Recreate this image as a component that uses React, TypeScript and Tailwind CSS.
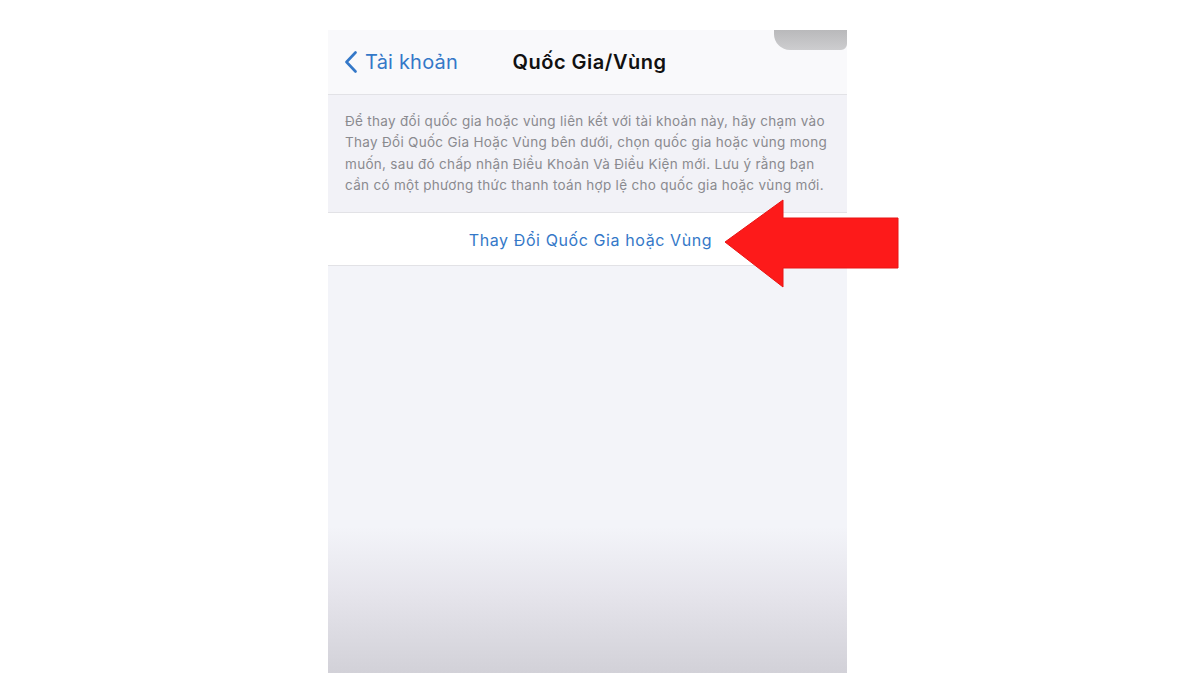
import React from "react";

const font = { fontFamily: "Inter, 'Noto Sans', 'Liberation Sans', sans-serif" };

function BackChevron() {
  return (
    <svg width="14" height="22" viewBox="0 0 14 22" className="shrink-0">
      <path
        d="M11.5 1.5 L2.5 11 L11.5 20.5"
        fill="none"
        stroke="#3478c8"
        strokeWidth="2.6"
        strokeLinecap="round"
        strokeLinejoin="round"
      />
    </svg>
  );
}

function RedArrow() {
  return (
    <svg
      width="176"
      height="90"
      viewBox="0 0 176 90"
      className="absolute left-[724px] top-[198px]"
    >
      <polygon
        points="1,44 59,2 59,20 174,20 174,70 59,70 59,89"
        fill="#fd1a1a"
        stroke="#e81414"
        strokeWidth="1"
      />
    </svg>
  );
}

export default function App() {
  const lines = [
    "Để thay đổi quốc gia hoặc vùng liên kết với tài khoản này, hãy chạm vào",
    "Thay Đổi Quốc Gia Hoặc Vùng bên dưới, chọn quốc gia hoặc vùng mong",
    "muốn, sau đó chấp nhận Điều Khoản Và Điều Kiện mới. Lưu ý rằng bạn",
    "cần có một phương thức thanh toán hợp lệ cho quốc gia hoặc vùng mới.",
  ];

  return (
    <div className="relative w-[1200px] h-[675px] bg-white overflow-hidden" style={font}>
      <div className="ml-[328px] pt-[30px] w-[519px] h-[675px]">
        <div className="relative flex flex-col h-[643px] bg-[#f3f4f9]">
          {/* header */}
          <div className="relative grid grid-cols-[1fr_auto_1fr] items-center h-[65px] px-[16px] bg-[#f9f9fb] border-b border-[#e2e2e6]">
            <div className="flex items-center gap-[7px]">
              <BackChevron />
              <span className="text-[20px] text-[#3478c8] tracking-[0.2px]">Tài khoản</span>
            </div>
            <div className="text-[20px] font-semibold text-[#111] tracking-[0.5px] pl-[4px]">
              Quốc Gia/Vùng
            </div>
            <div />
            <div className="absolute right-0 top-0 w-[73px] h-[20px] rounded-bl-[16px] rounded-br-[6px] bg-[linear-gradient(to_bottom,#b9b9bb,#cdcdcf)]" />
          </div>

          {/* description */}
          <div className="px-[17px] pt-[16px] pb-[16px] bg-[#f2f2f7] text-[13.5px] leading-[21.3px] tracking-[0.3px] text-[#8a8a8f] whitespace-nowrap">
            {lines.map((l) => (
              <div key={l}>{l}</div>
            ))}
          </div>

          {/* action row */}
          <div className="flex items-center justify-center h-[54px] pt-[2px] bg-white border-y border-[#e2e2e6]">
            <span className="text-[16px] tracking-[0.6px] text-[#3478c8] pl-[6px]">Thay Đổi Quốc Gia hoặc Vùng</span>
          </div>

          {/* empty area */}
          <div className="flex-1 bg-[linear-gradient(to_bottom,#f3f4f9_0%,#f3f4f9_64%,#e6e5ec_80%,#d2d1d8_100%)]" />
        </div>
      </div>
      <RedArrow />
    </div>
  );
}
